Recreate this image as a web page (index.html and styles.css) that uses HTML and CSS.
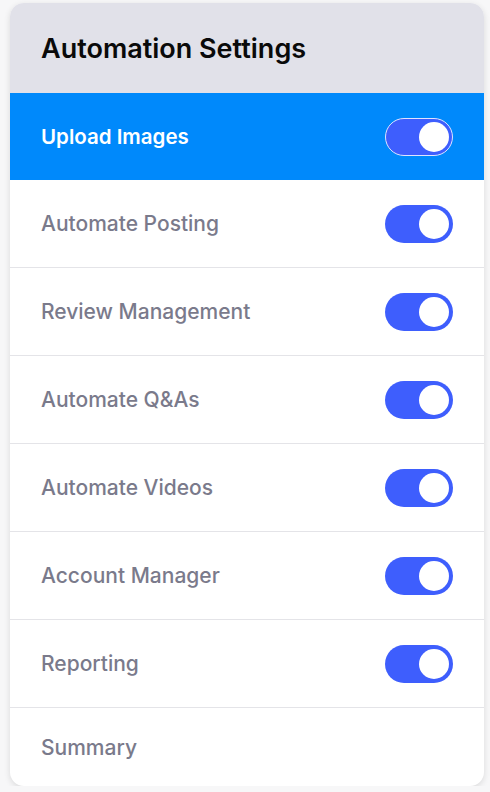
FILE: index.html
```html
<!DOCTYPE html>
<html lang="en">
<head>
<meta charset="utf-8">
<title>Automation Settings</title>
<link rel="stylesheet" href="styles.css">
</head>
<body>
<div class="card">
  <div class="card-header"><h1 class="title">Automation Settings</h1></div>
  <ul class="list">
    <li class="row row-active"><span class="label">Upload Images</span><span class="toggle toggle-outlined"><span class="knob"></span></span></li>
    <li class="row"><span class="label">Automate Posting</span><span class="toggle"><span class="knob"></span></span></li>
    <li class="row"><span class="label">Review Management</span><span class="toggle"><span class="knob"></span></span></li>
    <li class="row"><span class="label">Automate Q&amp;As</span><span class="toggle"><span class="knob"></span></span></li>
    <li class="row"><span class="label">Automate Videos</span><span class="toggle"><span class="knob"></span></span></li>
    <li class="row"><span class="label">Account Manager</span><span class="toggle"><span class="knob"></span></span></li>
    <li class="row"><span class="label">Reporting</span><span class="toggle"><span class="knob"></span></span></li>
    <li class="row row-last"><span class="label">Summary</span></li>
  </ul>
</div>
</body>
</html>
```

FILE: styles.css
```css
html, body {
  margin: 0;
  padding: 0;
  background: #f7f7f8;
}
body {
  padding: 3px 6px 0 10px;
  font-family: Inter, "Noto Sans", sans-serif;
}
.card {
  width: 474px;
  background: #ffffff;
  border-radius: 14px;
  overflow: hidden;
  box-shadow: 0 2px 6px rgba(0, 0, 0, 0.12);
}
.card-header {
  background: #e1e1e9;
  height: 90px;
  display: flex;
  align-items: center;
  padding: 0 31px;
}
.title {
  margin: 0;
  font-size: 27px;
  font-weight: 600;
  color: #0a0a0a;
}
.list {
  list-style: none;
  margin: 0;
  padding: 0;
}
.row {
  display: flex;
  align-items: center;
  justify-content: space-between;
  height: 87px;
  padding: 0 31px;
  border-bottom: 1px solid #e4e4e8;
}
.row-active {
  background: #0089fb;
  border-bottom: none;
}
.row-last {
  border-bottom: none;
  height: 78px;
}
.label {
  font-size: 21px;
  font-weight: 500;
  color: #7a7a8b;
}
.row-active .label {
  color: #ffffff;
  font-size: 20.5px;
  font-weight: 600;
}
.toggle {
  width: 68px;
  height: 38px;
  box-sizing: border-box;
  border-radius: 19px;
  background: #3e5efd;
  display: flex;
  align-items: center;
  justify-content: flex-end;
  padding: 0 4px;
}
.toggle-outlined {
  border: 1px solid #dfe3ff;
  padding: 0 3px;
}
.knob {
  width: 30px;
  height: 30px;
  border-radius: 50%;
  background: #ffffff;
}
```
